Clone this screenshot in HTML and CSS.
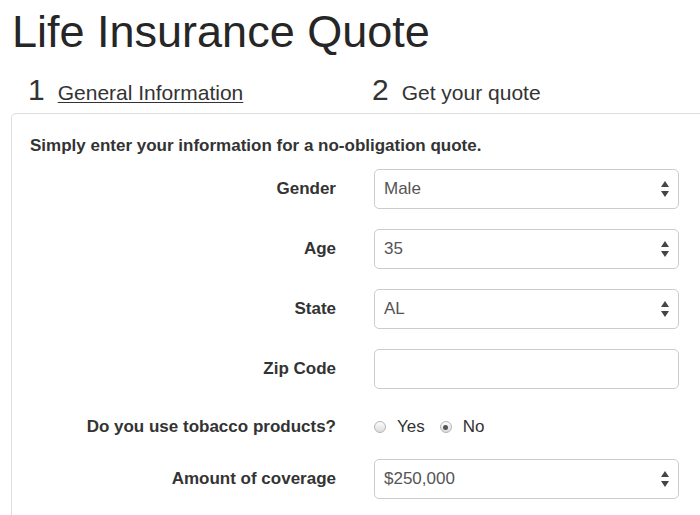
FILE: index.html
```html
<!DOCTYPE html>
<html>
<head>
<meta charset="utf-8">
<link rel="stylesheet" href="styles.css">
</head>
<body>
<h1 class="title">Life Insurance Quote</h1>
<div class="steps">
  <div class="step"><span class="step-num">1</span><a class="step-link" href="#">General Information</a></div>
  <div class="step"><span class="step-num">2</span><span class="step-text">Get your quote</span></div>
</div>
<div class="panel">
  <p class="intro">Simply enter your information for a no-obligation quote.</p>
  <div class="form">
    <label class="label">Gender</label>
    <div class="select"><span>Male</span><svg class="arrows" width="8" height="16" viewBox="0 0 8 16"><path d="M4 0 L8 6 L0 6 Z" fill="#444"/><path d="M0 10 L8 10 L4 16 Z" fill="#444"/></svg></div>

    <label class="label">Age</label>
    <div class="select"><span>35</span><svg class="arrows" width="8" height="16" viewBox="0 0 8 16"><path d="M4 0 L8 6 L0 6 Z" fill="#444"/><path d="M0 10 L8 10 L4 16 Z" fill="#444"/></svg></div>

    <label class="label">State</label>
    <div class="select"><span>AL</span><svg class="arrows" width="8" height="16" viewBox="0 0 8 16"><path d="M4 0 L8 6 L0 6 Z" fill="#444"/><path d="M0 10 L8 10 L4 16 Z" fill="#444"/></svg></div>

    <label class="label">Zip Code</label>
    <div class="input"></div>

    <label class="label label-radio">Do you use tobacco products?</label>
    <div class="radios">
      <span class="radio"></span><span class="radio-text">Yes</span>
      <span class="radio radio-checked"></span><span class="radio-text">No</span>
    </div>

    <label class="label">Amount of coverage</label>
    <div class="select"><span>$250,000</span><svg class="arrows" width="8" height="16" viewBox="0 0 8 16"><path d="M4 0 L8 6 L0 6 Z" fill="#444"/><path d="M0 10 L8 10 L4 16 Z" fill="#444"/></svg></div>
  </div>
</div>
</body>
</html>
```
FILE: styles.css
```css
* { box-sizing: border-box; }
html, body {
  margin: 0;
  padding: 0;
  background: #fff;
  font-family: "Liberation Sans", Arial, sans-serif;
  color: #333;
  overflow: hidden;
}
.title {
  margin: 9px 0 0 12px;
  font-size: 45px;
  line-height: 45px;
  font-weight: normal;
  color: #262626;
}
.steps {
  display: flex;
  margin: 18px 0 5px 28px;
  height: 36px;
}
.step {
  flex: 0 0 344px;
  display: flex;
  align-items: baseline;
  gap: 13px;
}
.step-num {
  font-size: 30px;
  line-height: 36px;
  color: #333;
}
.step-link, .step-text {
  font-size: 21px;
  color: #333;
}
.step-link {
  text-decoration: underline;
  text-decoration-thickness: 1px;
  text-underline-offset: 2px;
}
.panel {
  margin-left: 11px;
  width: 690px;
  height: 410px;
  border: 1px solid #ddd;
  border-radius: 5px 0 0 0;
  padding: 22px 0 0 18px;
}
.intro {
  margin: 0 0 13px 0;
  font-size: 17px;
  line-height: 20px;
  font-weight: bold;
  color: #333;
}
.form {
  display: grid;
  grid-template-columns: 306px 305px;
  column-gap: 38px;
  row-gap: 20px;
  align-items: center;
}
.label {
  text-align: right;
  font-size: 17px;
  font-weight: bold;
  color: #333;
}
.select, .input {
  height: 40px;
  border: 1px solid #ccc;
  border-radius: 5px;
  background: #fff;
  display: flex;
  align-items: center;
  justify-content: space-between;
  padding: 0 9px 0 9px;
  font-size: 17px;
  color: #555;
}
.radios {
  display: flex;
  align-items: center;
  height: 30px;
  padding-top: 6px;
  font-size: 17px;
  color: #333;
}
.label-radio { padding-top: 6px; }
.radio {
  width: 12px;
  height: 12px;
  border-radius: 50%;
  border: 1px solid #b5b5b5;
  background: linear-gradient(#fdfdfd, #dcdcdc);
  margin: 0 11px 0 0;
  position: relative;
}
.radio-checked::after {
  content: "";
  position: absolute;
  left: 2.5px;
  top: 2.5px;
  width: 5px;
  height: 5px;
  border-radius: 50%;
  background: #555;
}
.radio-text { margin-right: 15px; }
```
